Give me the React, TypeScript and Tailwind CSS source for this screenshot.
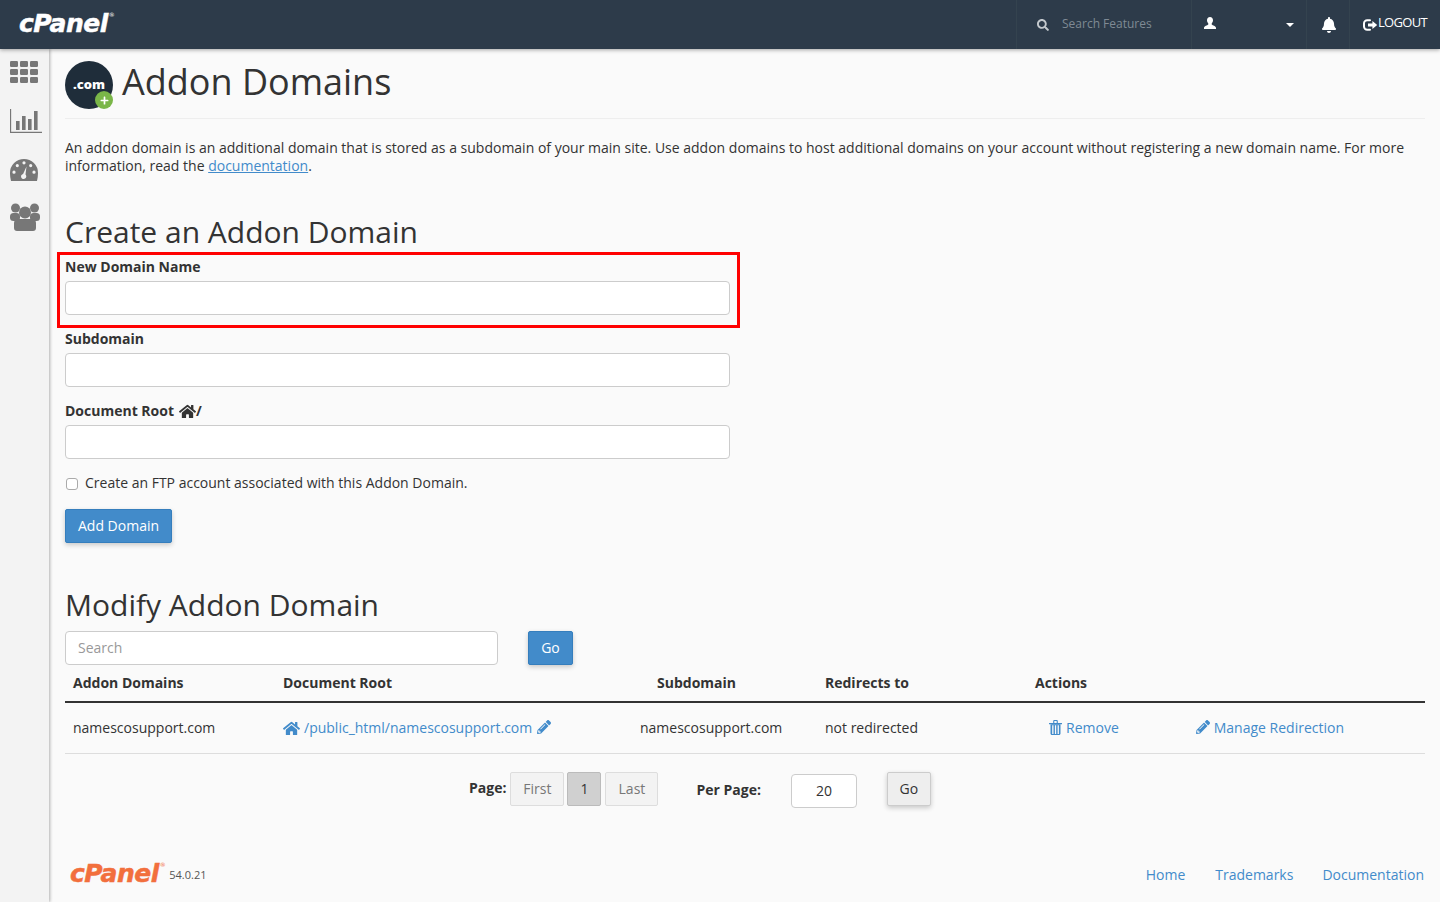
import { FaBell, FaHome, FaPencilAlt, FaPlus, FaSearch } from 'react-icons/fa';

const link = 'text-[#428bca]';

function LogoutIcon() {
  return (
    <svg width="15" height="12" viewBox="0 0 15 12" className="text-white" aria-hidden>
      <path d="M7 1.200H4.200A3.200 3.200 0 0 0 1 4.400v3.200a3.200 3.200 0 0 0 3.200 3.200H7" fill="none" stroke="currentColor" strokeWidth="2" strokeLinecap="round" />
      <path d="M5 4.600h4.400V2l4.800 4-4.800 4V7.400H5Z" fill="currentColor" />
    </svg>
  );
}

function UserIcon() {
  return (
    <svg width="12" height="12" viewBox="0 0 12 12" className="text-white" aria-hidden>
      <path d="M6 0c1.900 0 3 1.300 3 3.200 0 1.300-.6 2.500-1.300 3.200v1.100C8.600 8.500 12 8.800 12 11v1H0v-1c0-2.200 3.400-2.500 4.300-3.500V6.400C3.600 5.700 3 4.500 3 3.200 3 1.300 4.100 0 6 0Z" fill="currentColor" />
    </svg>
  );
}

function GridIcon() {
  return (
    <svg width="28" height="22" viewBox="0 0 28 22" className="block text-[#777]" aria-hidden>
      <g fill="currentColor">
        <rect x="0" y="0" width="8" height="6" rx="1.200" />
        <rect x="10" y="0" width="8" height="6" rx="1.200" />
        <rect x="20" y="0" width="8" height="6" rx="1.200" />
        <rect x="0" y="8" width="8" height="6" rx="1.200" />
        <rect x="10" y="8" width="8" height="6" rx="1.200" />
        <rect x="20" y="8" width="8" height="6" rx="1.200" />
        <rect x="0" y="16" width="8" height="6" rx="1.200" />
        <rect x="10" y="16" width="8" height="6" rx="1.200" />
        <rect x="20" y="16" width="8" height="6" rx="1.200" />
      </g>
    </svg>
  );
}

function StatsIcon() {
  return (
    <svg width="32" height="24" viewBox="0 0 32 24" className="block text-[#777]" aria-hidden>
      <path d="M.5 0v23.300H32" fill="none" stroke="currentColor" strokeWidth="1.300" />
      <path d="M6 12h3.600v9H6zM12 7h3.600v14H12zM18 10h3.600v11H18zM24 2h3.600v19H24z" fill="currentColor" />
    </svg>
  );
}

function GaugeIcon() {
  return (
    <svg width="28" height="22" viewBox="0 0 28 22" className="block text-[#777]" aria-hidden>
      <path
        fillRule="evenodd"
        fill="currentColor"
        d="M14 0a14 14 0 0 1 14 14c0 2.900-.4 5.600-1 8H1a30 30 0 0 1-1-8A14 14 0 0 1 14 0Zm0 2.200a1.600 1.600 0 1 0 0 3.200 1.600 1.600 0 0 0 0-3.200ZM7.300 5a1.600 1.600 0 1 0 0 3.200 1.600 1.600 0 0 0 0-3.200Zm13.400 0a1.600 1.600 0 1 0 0 3.200 1.600 1.600 0 0 0 0-3.200ZM4 11.600a1.600 1.600 0 1 0 0 3.200 1.600 1.600 0 0 0 0-3.200Zm20 0a1.600 1.600 0 1 0 0 3.200 1.600 1.600 0 0 0 0-3.200ZM16.500 7.500l-3.400 7.400a2.600 2.600 0 1 0 2.400.7Z"
      />
    </svg>
  );
}

function UsersIcon() {
  return (
    <svg width="30" height="28" viewBox="0 0 30 28" className="block text-[#777]" aria-hidden>
      <g fill="currentColor">
        <circle cx="5.500" cy="5" r="4.500" />
        <circle cx="24.500" cy="5" r="4.500" />
        <circle cx="15" cy="9.500" r="6" />
        <rect x="0" y="10" width="10" height="8" rx="3.500" />
        <rect x="20" y="10" width="10" height="8" rx="3.500" />
        <path d="M8 16h14c2 0 4 1.500 4 4v5c0 1.800-1.200 3-3 3H7c-1.800 0-3-1.200-3-3v-5c0-2.500 2-4 4-4Z" />
      </g>
    </svg>
  );
}

function TrashIcon() {
  return (
    <svg width="13" height="15" viewBox="0 0 13 15" className="mr-[4px] text-[#428bca]" aria-hidden>
      <path d="M0 3h13v1.300H0zM4.200 3V1.200C4.200.5 4.700 0 5.400 0h2.200c.7 0 1.200.5 1.200 1.200V3H7.700V1.100H5.300V3Z" fill="currentColor" />
      <path d="M1.500 4.300h10V13.500c0 .9-.6 1.500-1.500 1.500H3c-.9 0-1.500-.6-1.500-1.500Zm1.700 1v8.700h1.300V5.300Zm2.700 0v8.700h1.300V5.300Zm2.700 0v8.700h1.300V5.300Z" fill="currentColor" fillRule="evenodd" />
    </svg>
  );
}

function Logo({ className }: { className: string }) {
  return (
    <span className={`font-['DejaVu_Sans',sans-serif] font-bold italic tracking-[-0.5px] [-webkit-text-stroke:0.5px_currentColor] ${className}`}>
      cPanel<sup className="ml-px align-[12px] text-[6px] font-normal not-italic leading-none [-webkit-text-stroke:0]">®</sup>
    </span>
  );
}

function TopBar() {
  return (
    <header className="relative z-10 flex h-[49px] items-center bg-[#2d3b4a] shadow-[0_1px_4px_rgba(0,0,0,0.35)]">
      <Logo className="ml-[19px] -mt-[2px] text-[25px] leading-none text-white" />
      <div className="ml-auto flex h-full text-[12px]">
        <div className="flex w-[176px] items-center border-x border-[#34434f] pl-[20px]">
          <FaSearch className="text-[12px] text-[#c4c9ce]" />
          <span className="-mt-[2px] ml-[13px] text-[#7f8a94]">Search Features</span>
        </div>
        <div className="flex w-[115px] items-center justify-between border-r border-[#34434f] pl-[12px] pr-[12px]">
          <div className="-mt-[4px]"><UserIcon /></div>
          <span className="h-0 w-0 border-x-[4px] border-t-[4px] border-x-transparent border-t-white" />
        </div>
        <div className="flex w-[43px] items-center justify-center border-r border-[#34434f] pl-px text-white">
          <FaBell className="text-[16px]" />
        </div>
        <div className="flex w-[90px] items-center pl-[13px] text-[13px] tracking-[-0.7px] text-white">
          <LogoutIcon />
          <span className="-mt-[3px]">LOGOUT</span>
        </div>
      </div>
    </header>
  );
}

function SideBar() {
  return (
    <aside className="flex w-[49px] shrink-0 flex-col items-start bg-[#f3f3f3] pl-[10px] pt-[12px] shadow-[1px_0_3px_rgba(0,0,0,0.3)]">
      <GridIcon />
      <div className="mt-[26px]"><StatsIcon /></div>
      <div className="mt-[26px]"><GaugeIcon /></div>
      <div className="mt-[22px]"><UsersIcon /></div>
    </aside>
  );
}

function Field({ label }: { label: React.ReactNode }) {
  return (
    <div className="w-[665px]">
      <label className="flex h-[18px] items-center text-[14px] font-bold leading-[18px] text-[#333]">{label}</label>
      <input className="mt-[5px] block h-[34px] w-full rounded-[4px] border border-[#ccc] bg-white" />
    </div>
  );
}

function Btn({ children, className }: { children: React.ReactNode; className: string }) {
  return (
    <button className={`h-[34px] rounded-[2px] border pb-[2px] text-[14px] shadow-[0_2px_5px_rgba(0,0,0,0.2)] ${className}`}>
      {children}
    </button>
  );
}

function DomainTable() {
  const cols = 'grid grid-cols-[210px_357px_185px_210px_1fr]';
  return (
    <div className="mr-[15px] mt-[9px] text-[14px]">
      <div className={`${cols} h-[29px] border-b-2 border-[#333] pl-[8px] font-bold leading-[18px] text-[#333]`}>
        <div>Addon Domains</div>
        <div>Document Root</div>
        <div className="pl-[17px]">Subdomain</div>
        <div>Redirects to</div>
        <div>Actions</div>
      </div>
      <div className={`${cols} h-[51px] items-center border-b border-[#ddd] pb-[2px] pl-[8px] text-[#333]`}>
        <div>namescosupport.com</div>
        <div className={`flex items-center ${link}`}>
          <FaHome className="mr-[4px] mt-[3px] text-[17px]" />
          /public_html/namescosupport.com
          <FaPencilAlt className="ml-[5px] text-[14px]" />
        </div>
        <div>namescosupport.com</div>
        <div>not redirected</div>
        <div className={`flex items-center pl-[14px] ${link}`}>
          <TrashIcon />
          Remove
          <FaPencilAlt className="ml-[77px] mr-[4px] text-[14px]" />
          Manage Redirection
        </div>
      </div>
    </div>
  );
}

function Pager() {
  return (
    <div className="mt-[18px] flex h-[34px] items-center pl-[404px] text-[14px] text-[#333]">
      <b className="-mt-[4px] mr-[4px]">Page:</b>
      <div className="flex h-[34px] w-[54px] items-center justify-center rounded-[2px] border border-[#ddd] bg-[#f3f3f3] pb-[2px] text-[#777]">First</div>
      <div className="ml-[3px] flex h-[34px] w-[34px] items-center justify-center rounded-[2px] border border-[#bbb] bg-[#d0d0d0] pb-[2px]">1</div>
      <div className="ml-[4px] flex h-[34px] w-[53px] items-center justify-center rounded-[2px] border border-[#ddd] bg-[#f3f3f3] pb-[2px] text-[#777]">Last</div>
      <b className="ml-[38px]">Per Page:</b>
      <div className="ml-[30px] mt-[4px] flex h-[34px] w-[66px] items-center justify-center rounded-[4px] border border-[#ccc] bg-white pb-[2px]">20</div>
      <Btn className="ml-[30px] w-[44px] border-[#ccc] bg-[#eee] text-[#333]">Go</Btn>
    </div>
  );
}

export default function App() {
  return (
    <div className="flex h-[902px] flex-col overflow-hidden bg-[#fafafa] font-['Open_Sans',sans-serif] text-[#333]">
      <TopBar />
      <div className="flex min-h-0 flex-1">
        <SideBar />
        <main className="flex min-w-0 flex-1 flex-col pl-[16px]">
          <div className="mr-[15px] flex h-[70px] items-start border-b border-[#eee] pt-[12px]">
            <div className="relative flex h-[48px] w-[48px] items-center justify-center rounded-full bg-[#1f2d3a] pb-[2px] text-[13px] font-extrabold leading-none text-white">
              .com
              <span className="absolute bottom-0 right-0 flex h-[18px] w-[18px] items-center justify-center rounded-full bg-[#7ab648]">
                <FaPlus className="text-[9px]" />
              </span>
            </div>
            <h1 className="ml-[9px] text-[36px] leading-[42px]">Addon Domains</h1>
          </div>
          <p className="mr-[15px] mt-[20px] text-[14px] leading-[18px]">
            An addon domain is an additional domain that is stored as a subdomain of your main site. Use addon domains to host additional domains on your account without registering a new domain name. For more information, read the <a className={`${link} underline`}>documentation</a>.
          </p>
          <h2 className="mt-[37px] text-[30px] leading-[40px]">Create an Addon Domain</h2>
          <div className="-ml-[8px] h-[76px] w-[683px] border-[3px] border-[#f00] pl-[5px] pt-[3px]">
            <Field label="New Domain Name" />
          </div>
          <div className="mt-[2px]">
            <Field label="Subdomain" />
          </div>
          <div className="mt-[15px]">
            <Field label={<>Document Root <FaHome className="ml-[5px] text-[17px]" />/</>} />
          </div>
          <label className="mt-[14px] flex h-[18px] items-center text-[14px]">
            <input type="checkbox" className="ml-px mr-[7px] mt-[3px] h-3 w-3 appearance-none rounded-[3px] border border-[#aaa] bg-white" />
            Create an FTP account associated with this Addon Domain.
          </label>
          <Btn className="mt-[18px] w-[107px] border-[#357ebd] bg-[#428bca] text-white">Add Domain</Btn>
          <h2 className="mt-[42px] text-[30px] leading-[40px]">Modify Addon Domain</h2>
          <div className="mt-[6px] flex">
            <input placeholder="Search" className="h-[34px] w-[433px] rounded-[4px] border border-[#ccc] bg-white px-3 pb-[2px] text-[14px] placeholder:text-[#999]" />
            <Btn className="ml-[30px] w-[45px] border-[#357ebd] bg-[#428bca] text-white">Go</Btn>
          </div>
          <DomainTable />
          <Pager />
          <footer className="mr-[16px] mt-auto flex h-[54px] items-center pb-[2px] text-[14px]">
            <Logo className="ml-[5px] -mt-[2px] text-[25px] leading-none text-[#f26f3d]" />
            <span className="ml-[4px] mt-[2px] text-[11px] text-[#555]">54.0.21</span>
            <a className={`ml-auto ${link}`}>Home</a>
            <a className={`ml-[30px] ${link}`}>Trademarks</a>
            <a className={`ml-[29px] ${link}`}>Documentation</a>
          </footer>
        </main>
      </div>
    </div>
  );
}
